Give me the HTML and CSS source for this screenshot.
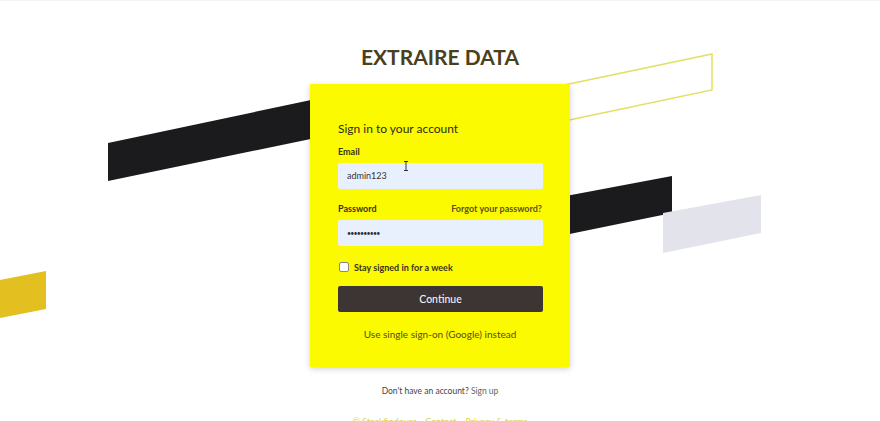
FILE: index.html
```html
<!DOCTYPE html>
<html lang="en">
<head>
<meta charset="utf-8">
<title>Extraire Data - Sign in</title>
<link rel="stylesheet" href="styles.css">
</head>
<body>
<svg class="backdrop" width="880" height="421" viewBox="0 0 880 421" aria-hidden="true">
  <polygon points="108,142 330,95 330,134 108,180" fill="#1b1b1d"/>
  <polygon points="550,198 672,175 672,212 550,237" fill="#1b1b1d"/>
  <polygon points="663,212 761,194 761,232 663,252" fill="#e3e4eb"/>
  <polygon points="550,87 712,53 712,89 550,123" fill="none" stroke="#e2e064" stroke-width="1.5"/>
  <polygon points="0,279 46,270 46,308 0,317" fill="#e3c020"/>
</svg>
<main class="page">
  <h1 class="brand">EXTRAIRE DATA</h1>
  <section class="card">
    <h2 class="card-title">Sign in to your account</h2>
    <form class="form">
      <div class="field">
        <div class="label-row"><label class="label">Email</label></div>
        <div class="input">admin123<span class="cursor"><svg width="6" height="10" viewBox="0 0 6 10"><path d="M1 0.5h4M3 0.5v9M1 9.5h4" stroke="#333" stroke-width="1" fill="none"/></svg></span></div>
      </div>
      <div class="field">
        <div class="label-row"><label class="label">Password</label><a class="forgot">Forgot your password?</a></div>
        <div class="input dots">••••••••••</div>
      </div>
      <label class="check"><span class="box"></span>Stay signed in for a week</label>
      <button class="btn" type="button">Continue</button>
      <p class="sso">Use single sign-on (Google) instead</p>
    </form>
  </section>
  <p class="signup">Don't have an account? <a class="signup-link">Sign up</a></p>
  <nav class="footer"><span>© Stackfindover</span><span>Contact</span><span>Privacy &amp; terms</span></nav>
</main>
</body>
</html>
```
FILE: styles.css
```css
* { box-sizing: border-box; }
html, body { margin: 0; padding: 0; }
body {
  width: 880px;
  height: 421px;
  overflow: hidden;
  background: #fff;
  font-family: Lato, "Open Sans", sans-serif;
  position: relative;
  border-top: 1px solid #f6f2f4;
}
.backdrop { position: absolute; left: 0; top: 0; z-index: 0; }
.page {
  position: relative;
  z-index: 1;
  display: flex;
  flex-direction: column;
  align-items: center;
}
.brand {
  margin: 40px 0 0;
  height: 43px;
  font-size: 21px;
  font-weight: 700;
  color: #4b3f1c;
  line-height: 32px;
}
.card {
  width: 260px;
  height: 283px;
  background: #fcfa00;
  padding: 36px 28px 0 28px;
  box-shadow: 0 2px 6px rgba(0,0,0,0.18);
}
.card-title {
  margin: 0;
  font-size: 12px;
  font-weight: 400;
  color: #2f2a14;
  line-height: 18px;
}
.form { display: flex; flex-direction: column; margin-top: 5px; }
.field { display: flex; flex-direction: column; margin-bottom: 11px; }
.label-row { display: flex; justify-content: space-between; align-items: center; height: 16px; margin-bottom: 4px; }
.label { font-size: 9px; font-weight: 700; color: #3a3318; }
.forgot { font-size: 9px; font-weight: 700; color: #5f5020; }
.input {
  position: relative;
  height: 26px;
  width: 205px;
  background: #e8f0fe;
  border-radius: 2px;
  padding-left: 9px;
  font-size: 9px;
  line-height: 26px;
  color: #333;
}
.dots { font-size: 7px; letter-spacing: -0.8px; }
.cursor { position: absolute; left: 65px; top: -2px; line-height: 0; }
.check {
  display: flex;
  align-items: center;
  gap: 5px;
  font-size: 9px;
  font-weight: 700;
  color: #3a3318;
  margin: 4px 0 0 1px;
  height: 12px;
}
.box { width: 10px; height: 10px; background: #fff; border: 1px solid #8a8a7a; border-radius: 2px; }
.btn {
  margin-top: 13px;
  width: 205px;
  height: 26px;
  background: #3d3434;
  border: 0;
  border-radius: 2px;
  color: #f2f2f2;
  font-family: inherit;
  font-size: 10.5px;
  font-weight: 500;
}
.sso {
  margin: 14px 0 0;
  text-align: center;
  font-size: 10px;
  color: #5a4a16;
  line-height: 16px;
}
.signup {
  margin: 17px 0 0;
  font-size: 8.5px;
  color: #444;
  line-height: 14px;
}
.signup-link { color: #666; }
.footer {
  display: flex;
  gap: 9px;
  margin-top: 17px;
  font-size: 9px;
  color: #dcd24a;
  line-height: 14px;
}
```
